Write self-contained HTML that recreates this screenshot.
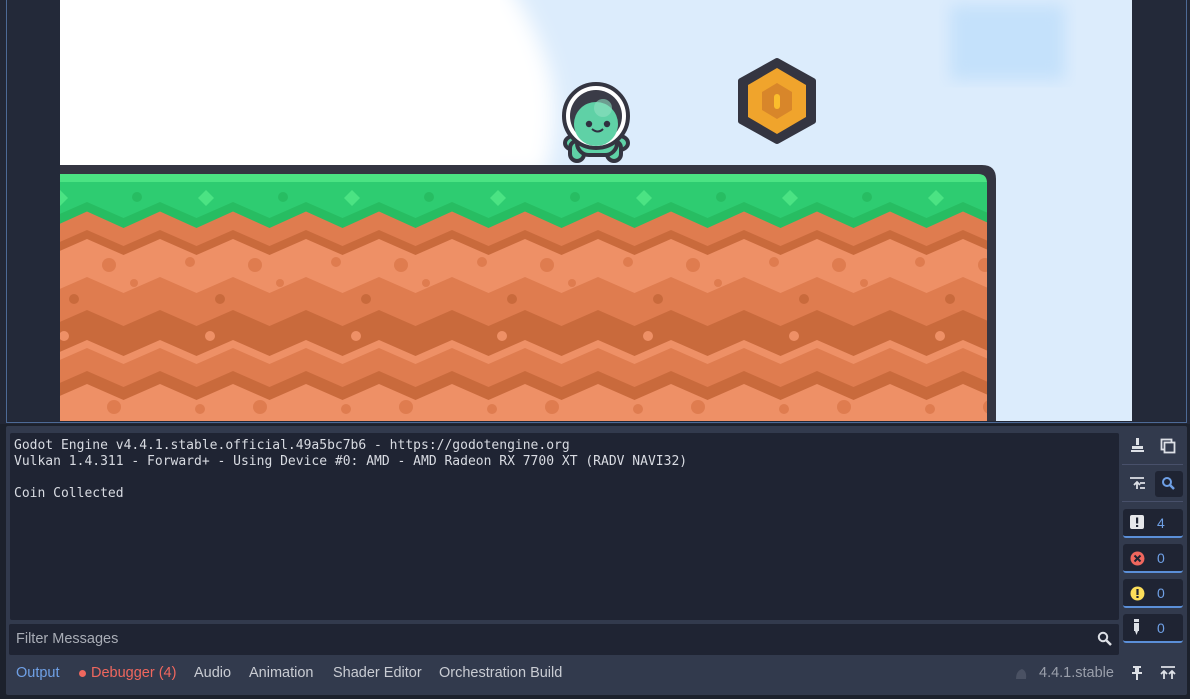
<!DOCTYPE html>
<html><head><meta charset="utf-8"><style>
*{margin:0;padding:0;box-sizing:border-box}
body{width:1190px;height:699px;overflow:hidden;background:#1c212c;font-family:"Liberation Sans",sans-serif;position:relative}
.abs{position:absolute}
.mono{font-family:"DejaVu Sans Mono","Liberation Mono",monospace;font-size:13px;color:#d8dbe2;line-height:16px}
.cnt{position:absolute;left:1123px;width:60px;height:29px;background:#1f2433;border-radius:3px;border-bottom:2px solid #5b8fd8}
.cnt span{position:absolute;left:34px;top:6px;color:#6fa0e6;font-size:14px}
.tab{position:absolute;top:665px;font-size:14.5px;color:#c9ccd3}
</style></head><body>
<div class="abs" style="left:0;top:0;width:1190px;height:424px;background:#222736"></div>
<div class="abs" style="left:6px;top:-2px;width:1181px;height:425px;border:1.5px solid #4d6a96"></div>
<div class="abs" style="left:8px;top:0;width:52px;height:421px;background:#232939"></div>
<div class="abs" style="left:1132px;top:0;width:54px;height:421px;background:#232939"></div>
<svg class="abs" style="left:60px;top:0" width="1072" height="421" viewBox="60 0 1072 421">
<defs>
<filter id="bl"><feGaussianBlur stdDeviation="8"/></filter>
<filter id="bl2"><feGaussianBlur stdDeviation="10"/></filter>
<pattern id="gp" patternUnits="userSpaceOnUse" x="14" y="0" width="146" height="421">
<rect x="0" y="0" width="146" height="421" fill="#2ecc71"/>
<rect x="0" y="174" width="146" height="8" fill="#4be383"/>
<polygon points="0,202 36.5,218 73,202 109.5,218 146,202 146,421 0,421" fill="#27bd62"/>
<polygon points="0,211.5 36.5,228 73,211.5 109.5,228 146,211.5 146,421 0,421" fill="#df7c4f"/>
<polygon points="0,230 36.5,246 73,230 109.5,246 146,230 146,421 0,421" fill="#c96a3c"/>
<polygon points="0,239 36.5,255 73,239 109.5,255 146,239 146,421 0,421" fill="#ee9066"/>
<polygon points="0,277 36.5,293 73,277 109.5,293 146,277 146,421 0,421" fill="#df7c4f"/>
<polygon points="0,310 36.5,326 73,310 109.5,326 146,310 146,421 0,421" fill="#c96a3c"/>
<polygon points="0,340 36.5,356 73,340 109.5,356 146,340 146,421 0,421" fill="#ee9066"/>
<polygon points="0,348 36.5,364 73,348 109.5,364 146,348 146,421 0,421" fill="#df7c4f"/>
<polygon points="0,371 36.5,387 73,371 109.5,387 146,371 146,421 0,421" fill="#c96a3c"/>
<polygon points="0,384 36.5,400 73,384 109.5,400 146,384 146,421 0,421" fill="#ee9066"/>
<polygon points="46,190 54,198 46,206 38,198" fill="#4be383"/>
<circle cx="123" cy="197" r="5" fill="#27bd62"/>
<circle cx="30" cy="262" r="5" fill="#df7c4f"/><circle cx="95" cy="265" r="7" fill="#df7c4f"/><circle cx="120" cy="283" r="4" fill="#df7c4f"/>
<circle cx="60" cy="299" r="5" fill="#c96a3c"/><circle cx="50" cy="336" r="5" fill="#ee9066"/>
<circle cx="100" cy="407" r="7" fill="#df7c4f"/><circle cx="40" cy="409" r="5" fill="#df7c4f"/>
</pattern>
</defs>
<rect x="60" y="0" width="1072" height="421" fill="#dcecfc"/>
<path d="M40,-20 H505 Q540,30 552,80 Q560,130 545,175 H40 Z" fill="#fff" filter="url(#bl2)"/>
<rect x="60" y="0" width="440" height="165" fill="#fff"/>
<rect x="950" y="5" width="115" height="75" fill="#c4e1fb" filter="url(#bl)"/>
<path d="M60,165 H982 Q996,165 996,179 V421 H60 Z" fill="#343541"/>
<path d="M60,174 H978 Q987,174 987,183 V421 H60 Z" fill="url(#gp)"/>
<g stroke="#343541" stroke-width="4">
<ellipse cx="574" cy="143" rx="9" ry="7" fill="#5fd1a6"/>
<ellipse cx="619" cy="143" rx="9" ry="7" fill="#5fd1a6"/>
<rect x="570" y="141" width="14" height="20" rx="7" fill="#5fd1a6"/>
<rect x="607" y="141" width="14" height="20" rx="7" fill="#5fd1a6"/>
<rect x="577" y="125" width="40" height="30" rx="12" fill="#5fd1a6"/>
<circle cx="596" cy="116" r="32" fill="#fff"/>
</g>
<circle cx="596" cy="116" r="26" fill="#3a3b47"/>
<circle cx="596" cy="124" r="22" fill="#5fd1a6"/>
<circle cx="603" cy="108" r="9" fill="#8fe0c2" opacity="0.6"/>
<circle cx="589" cy="124" r="3.2" fill="#2f3040"/><circle cx="607" cy="124" r="3.2" fill="#2f3040"/>
<path d="M592,129 Q598,134 603,129" stroke="#2f3040" stroke-width="2" fill="none"/>
<polygon points="777,61 813,81 813,121 777,141 741,121 741,81" fill="#343541" stroke="#343541" stroke-width="6" stroke-linejoin="round"/>
<polygon points="777,68 806,85 806,117 777,134 748,117 748,85" fill="#f0a42c"/>
<polygon points="777,83 792,92 792,110 777,119 762,110 762,92" fill="#d8862a"/>
<rect x="774" y="94" width="6" height="15" rx="3" fill="#fbbd2c"/>
</svg>
<div class="abs" style="left:0;top:424px;width:1190px;height:275px;background:#1c212c"></div>
<div class="abs" style="left:6px;top:426px;width:1181px;height:269px;background:#323a4d;border-radius:2px"></div>
<div class="abs" style="left:10px;top:433px;width:1109px;height:187px;background:#1f2433;border-radius:2px"></div>
<div class="abs mono" style="left:14px;top:438px;white-space:pre">Godot Engine v4.4.1.stable.official.49a5bc7b6 - https://godotengine.org
Vulkan 1.4.311 - Forward+ - Using Device #0: AMD - AMD Radeon RX 7700 XT (RADV NAVI32)

Coin Collected</div>
<div class="abs" style="left:9px;top:624px;width:1110px;height:31px;background:#1f2433;border-radius:2px"></div>
<div class="abs" style="left:16px;top:631px;font-size:14.5px;color:#a9adb6">Filter Messages</div>
<svg class="abs" style="left:1097px;top:631px" width="16" height="16"><circle cx="6" cy="6" r="4.2" stroke="#dde0e6" stroke-width="2" fill="none"/><path d="M9,9 L14,14" stroke="#dde0e6" stroke-width="2.5"/></svg>
<svg class="abs" style="left:1128px;top:437px" width="60" height="60">
<path d="M8,1 h3 v7 h-3z M4,9 h11 v3 h-11z M3,13 h13 v2 h-13z" fill="#dde0e6"/>
<rect x="33.5" y="2.5" width="10" height="10" fill="none" stroke="#dde0e6" stroke-width="1.8"/>
<rect x="36.5" y="5.5" width="10" height="10" fill="#323a4d" stroke="#dde0e6" stroke-width="1.8"/>
<path d="M2,41 h14 M9,45 v7 M6,48 l3,-3 3,3 M12,46 h5 M12,51 h5" stroke="#dde0e6" stroke-width="1.8" fill="none"/>
</svg>
<div class="abs" style="left:1122px;top:464px;width:61px;height:1px;background:#48506a"></div>
<div class="abs" style="left:1122px;top:501px;width:61px;height:1px;background:#48506a"></div>
<div class="abs" style="left:1155px;top:471px;width:28px;height:26px;background:#1f2433;border-radius:3px"></div>
<svg class="abs" style="left:1161px;top:476px" width="16" height="16"><circle cx="6" cy="6" r="4" stroke="#6fa0e6" stroke-width="2" fill="none"/><path d="M9,9 L13,13" stroke="#6fa0e6" stroke-width="2.5"/></svg>
<div class="cnt" style="top:509px"><svg class="abs" style="left:7px;top:6px" width="14" height="14"><rect x="0" y="0" width="14" height="14" rx="2" fill="#e6e7ea"/><rect x="6" y="2.5" width="2.2" height="6" fill="#1f2433"/><rect x="6" y="10" width="2.2" height="2" fill="#1f2433"/></svg><span>4</span></div>
<div class="cnt" style="top:544px"><svg class="abs" style="left:7px;top:7px" width="15" height="15"><circle cx="7.5" cy="7.5" r="7" fill="#f0675e"/><path d="M4.5,4.5 l6,6 M10.5,4.5 l-6,6" stroke="#1f2433" stroke-width="2"/></svg><span>0</span></div>
<div class="cnt" style="top:579px"><svg class="abs" style="left:7px;top:7px" width="15" height="15"><circle cx="7.5" cy="7.5" r="7" fill="#fcde5a"/><rect x="6.4" y="3" width="2.2" height="6" fill="#1f2433"/><rect x="6.4" y="10" width="2.2" height="2" fill="#1f2433"/></svg><span>0</span></div>
<div class="cnt" style="top:614px"><svg class="abs" style="left:8px;top:5px" width="12" height="18"><rect x="3" y="0" width="5" height="3" fill="#dde0e6"/><rect x="3" y="4" width="5" height="8" fill="#dde0e6"/><path d="M4,12 h3 l-1.5,4z" fill="#dde0e6"/></svg><span>0</span></div>
<div class="tab" style="left:16px;color:#6fa0e6">Output</div>
<div class="abs" style="left:79px;top:670px;width:7px;height:7px;border-radius:50%;background:#f0675e"></div>
<div class="tab" style="left:91px;color:#f0675e">Debugger (4)</div>
<div class="tab" style="left:194px">Audio</div>
<div class="tab" style="left:249px">Animation</div>
<div class="tab" style="left:333px">Shader Editor</div>
<div class="tab" style="left:439px">Orchestration Build</div>
<svg class="abs" style="left:1013px;top:666px" width="16" height="16"><path d="M3,13 Q3,5 9,3 Q14,5 13,13z" fill="#4a5163"/></svg>
<div class="tab" style="left:1039px;color:#9a9fab">4.4.1.stable</div>
<svg class="abs" style="left:1129px;top:665px" width="60" height="18">
<path d="M4,1 h8 v2 h-2 v4 h3 v2 h-10 v-2 h3 v-4 h-2z M7,9 h2 v6 h-2z" fill="#dde0e6"/>
<path d="M32,2 h14 M35,14 v-8 M32,9 l3,-3 3,3 M43,14 v-8 M40,9 l3,-3 3,3" stroke="#dde0e6" stroke-width="1.8" fill="none"/>
</svg>
</body></html>
